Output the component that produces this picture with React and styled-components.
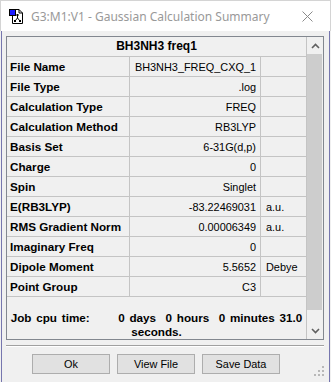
import { Fragment } from 'react';
import styled, { createGlobalStyle } from 'styled-components';

const GlobalStyle = createGlobalStyle`
  html, body {
    margin: 0;
    padding: 0;
    background: #f0f0f0;
  }
  body {
    font-family: "Liberation Sans", Arial, sans-serif;
  }
`;

const Window = styled.div`
  width: 331px;
  height: 382px;
  display: flex;
  flex-direction: column;
  background: #f0f0f0;
  overflow: hidden;
`;

const TitleBar = styled.div`
  height: 31px;
  flex: none;
  box-sizing: border-box;
  background: #fff;
  border: 1px solid #d4d4d4;
  border-bottom: none;
  display: flex;
  align-items: center;
  padding-left: 8px;
`;

const TitleText = styled.span`
  margin-left: 7px;
  font-family: "Noto Sans", "Open Sans", sans-serif;
  font-size: 12px;
  color: #999;
  flex: 1;
  white-space: nowrap;
`;

const CloseBox = styled.div`
  width: 46px;
  height: 30px;
  display: flex;
  align-items: center;
  justify-content: center;
`;

const Body = styled.div`
  position: relative;
  flex: 1;
  margin: 0 1px;
  border-left: 1px solid #7676ae;
  border-right: 1px solid #7676ae;
  padding: 5px 4px 0 4px;
`;

const Panel = styled.div`
  width: 318px;
  height: 304px;
  box-sizing: border-box;
  border: 1px solid #82878f;
  display: flex;
`;

const Content = styled.div`
  width: 300px;
  box-sizing: border-box;
  border-right: 1px solid #c4c4c4;
  overflow: hidden;
`;

const Header = styled.div`
  height: 20px;
  box-sizing: border-box;
  border-bottom: 1px solid #c4c4c4;
  font-weight: bold;
  font-size: 12px;
  line-height: 19px;
  text-align: center;
  color: #000;
`;

const Table = styled.div`
  display: grid;
  grid-template-columns: 123px 131px 45px;
  grid-auto-rows: 20px;
`;

const Cell = styled.div`
  box-sizing: border-box;
  border-bottom: 1px solid #c4c4c4;
  border-right: ${(p) => (p.$kind === 'unit' ? 'none' : '1px solid #c4c4c4')};
  padding: ${(p) => (p.$kind === 'value' ? '0 4px 0 0' : p.$kind === 'unit' ? '0 0 0 5px' : '0 0 0 3px')};
  text-align: ${(p) => (p.$kind === 'value' ? 'right' : 'left')};
  font-weight: ${(p) => (p.$kind === 'label' ? 'bold' : 'normal')};
  font-size: ${(p) => (p.$kind === 'label' ? '11.7px' : '10.9px')};
  line-height: 20px;
  color: #000;
  white-space: nowrap;
  overflow: hidden;
`;

const CpuTime = styled.div`
  padding-top: 14px;
  font-weight: bold;
  font-size: 11.7px;
  line-height: 14px;
  word-spacing: 1.5px;
  text-align: center;
  white-space: pre;
  color: #000;
`;

const ScrollBar = styled.div`
  width: 16px;
  display: flex;
  flex-direction: column;
  background: #f0f0f0;
`;

const ArrowBtn = styled.div`
  height: 17px;
  flex: none;
  display: flex;
  align-items: center;
  justify-content: center;
`;

const Thumb = styled.div`
  height: 256px;
  flex: none;
  margin: 0 1px 0 0;
  background: #cdcdcd;
`;

const Track = styled.div`
  flex: 1;
`;

const Separator = styled.div`
  width: 318px;
  margin-top: 5px;
  border-top: 1px solid #a0a0a0;
  border-bottom: 1px solid #fff;
`;

const ButtonRow = styled.div`
  display: flex;
  gap: 7px;
  margin-top: 7px;
  padding-left: 26px;
`;

const Button = styled.button`
  width: 78px;
  height: 20px;
  box-sizing: border-box;
  border: 1px solid #adadad;
  background: #e1e1e1;
  font-family: "Liberation Sans", Arial, sans-serif;
  font-size: 10.9px;
  color: #000;
  padding: 0;
`;

const Grip = styled.svg`
  position: absolute;
  right: 5px;
  bottom: 6px;
`;

const rows = [
  ['File Name', 'BH3NH3_FREQ_CXQ_1', ''],
  ['File Type', '.log', ''],
  ['Calculation Type', 'FREQ', ''],
  ['Calculation Method', 'RB3LYP', ''],
  ['Basis Set', '6-31G(d,p)', ''],
  ['Charge', '0', ''],
  ['Spin', 'Singlet', ''],
  ['E(RB3LYP)', '-83.22469031', 'a.u.'],
  ['RMS Gradient Norm', '0.00006349', 'a.u.'],
  ['Imaginary Freq', '0', ''],
  ['Dipole Moment', '5.5652', 'Debye'],
  ['Point Group', 'C3', ''],
];

function AppIcon() {
  return (
    <svg width="15" height="16" viewBox="0 0 15 16">
      <path d="M3.5 1.5 H10 L13.5 5 V15.5 H3.5 Z" fill="#fff" stroke="#000" />
      <path d="M10 1.5 V5 H13.5" fill="none" stroke="#000" />
      <rect x="0.5" y="1.5" width="6" height="6" fill="#1a1aff" stroke="#000" />
      <path d="M8.5 7 V10 M8.5 10 L6 13 M8.5 10 L11 13" stroke="#000" strokeWidth="1" fill="none" />
      <rect x="5" y="12" width="2" height="2" fill="#000" />
      <rect x="10" y="12" width="2" height="2" fill="#000" />
      <rect x="7.5" y="6" width="2" height="2" fill="#000" />
    </svg>
  );
}

function Chevron({ up }) {
  return (
    <svg width="9" height="6" viewBox="0 0 9 6">
      <polyline
        points={up ? '1,5 4.5,1.5 8,5' : '1,1 4.5,4.5 8,1'}
        fill="none"
        stroke="#606060"
        strokeWidth="1.6"
      />
    </svg>
  );
}

export default function App() {
  return (
    <>
      <GlobalStyle />
      <Window>
        <TitleBar>
          <AppIcon />
          <TitleText>G3:M1:V1 - Gaussian Calculation Summary</TitleText>
          <CloseBox>
            <svg width="11" height="11" viewBox="0 0 11 11">
              <path d="M0.5 0.5 L10.5 10.5 M10.5 0.5 L0.5 10.5" stroke="#8a8a8a" strokeWidth="1" />
            </svg>
          </CloseBox>
        </TitleBar>
        <Body>
          <Panel>
            <Content>
              <Header>BH3NH3 freq1</Header>
              <Table>
                {rows.map(([label, value, unit]) => (
                  <Fragment key={label}>
                    <Cell $kind="label">{label}</Cell>
                    <Cell $kind="value">{value}</Cell>
                    <Cell $kind="unit">{unit}</Cell>
                  </Fragment>
                ))}
              </Table>
              <CpuTime>{'Job cpu time:      0 days  0 hours  0 minutes 31.0\nseconds.'}</CpuTime>
            </Content>
            <ScrollBar>
              <ArrowBtn><Chevron up /></ArrowBtn>
              <Thumb />
              <Track />
              <ArrowBtn><Chevron /></ArrowBtn>
            </ScrollBar>
          </Panel>
          <Separator />
          <ButtonRow>
            <Button>Ok</Button>
            <Button>View File</Button>
            <Button>Save Data</Button>
          </ButtonRow>
          <Grip width="10" height="10" viewBox="0 0 10 10">
            <rect x="8" y="0" width="2" height="2" fill="#b8b8b8" />
            <rect x="4" y="4" width="2" height="2" fill="#b8b8b8" />
            <rect x="8" y="4" width="2" height="2" fill="#b8b8b8" />
            <rect x="0" y="8" width="2" height="2" fill="#b8b8b8" />
            <rect x="4" y="8" width="2" height="2" fill="#b8b8b8" />
            <rect x="8" y="8" width="2" height="2" fill="#b8b8b8" />
          </Grip>
        </Body>
      </Window>
    </>
  );
}
